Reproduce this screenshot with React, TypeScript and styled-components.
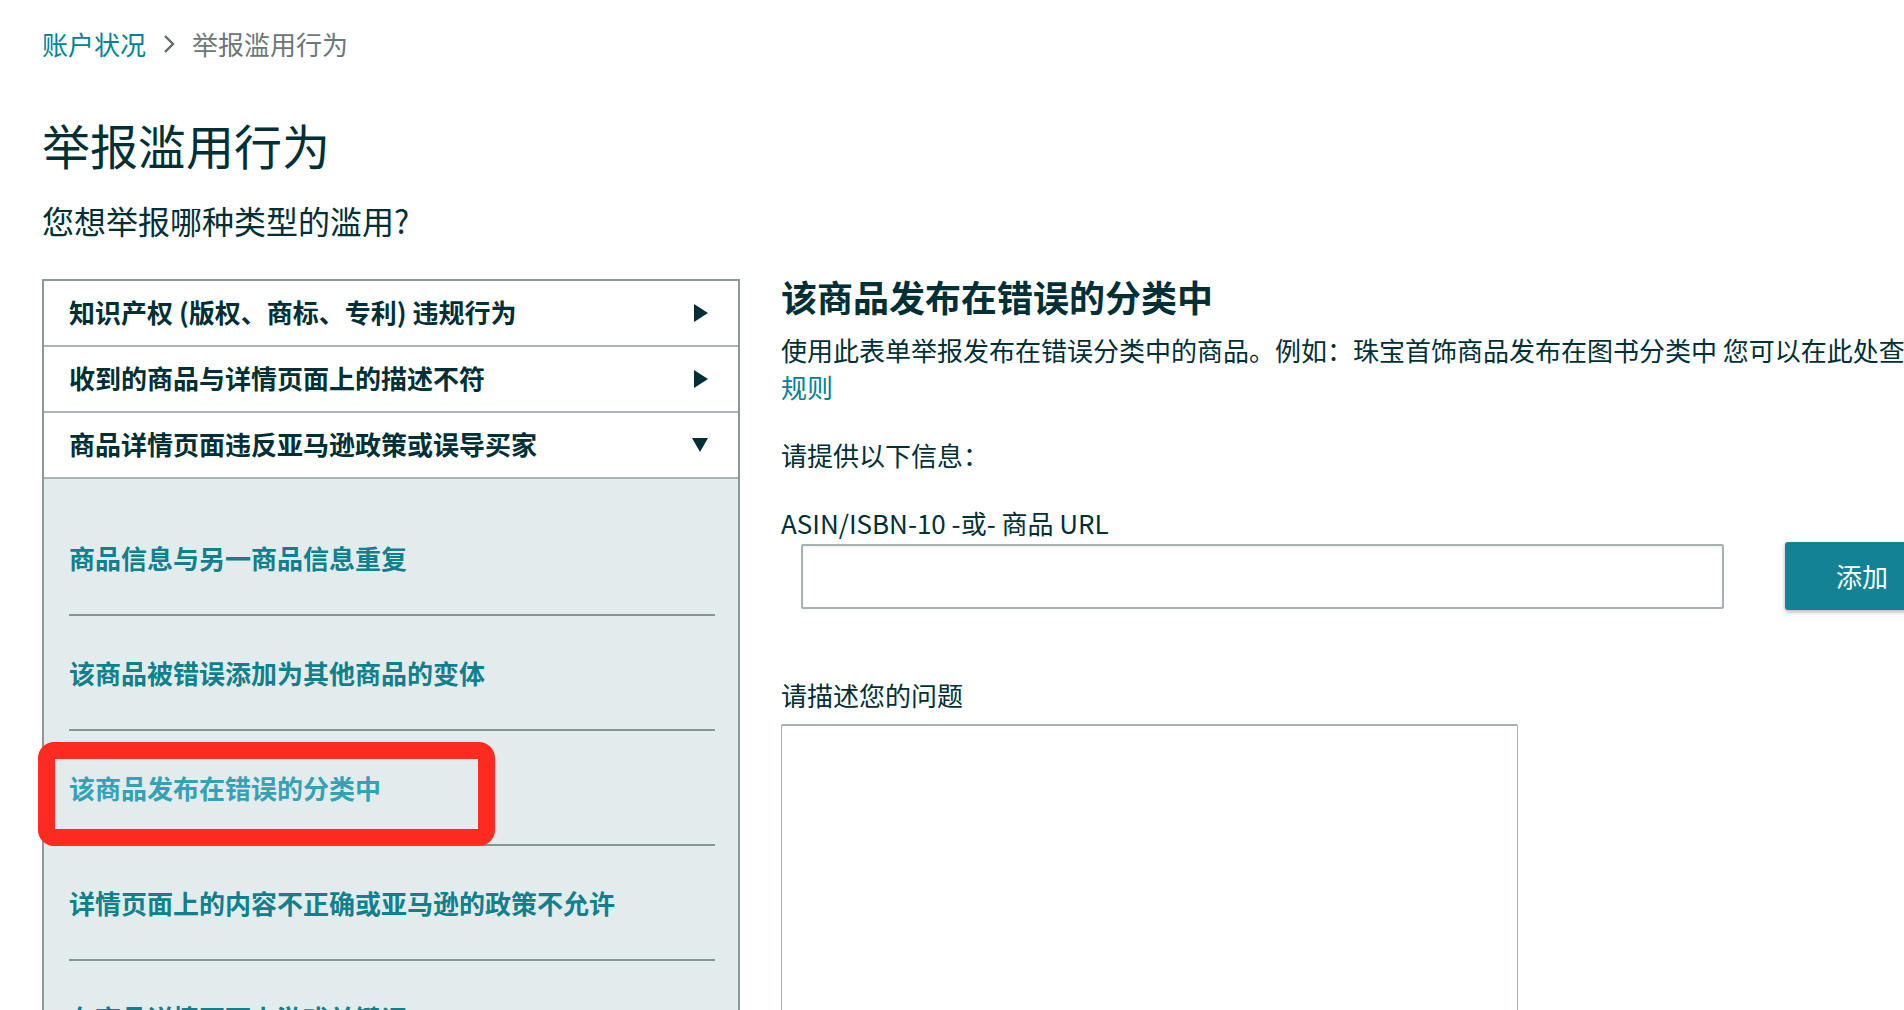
import React from "react";
import styled, { createGlobalStyle } from "styled-components";

const GlobalStyle = createGlobalStyle`
  html, body {
    margin: 0;
    padding: 0;
    background: #ffffff;
    overflow: hidden;
  }
  body {
    font-family: "Noto Sans CJK SC", "Noto Sans", sans-serif;
    color: #002f36;
  }
  * { box-sizing: border-box; }
`;

const Page = styled.div`
  width: 2040px;
  padding: 26px 0 0 42px;
`;

const Breadcrumb = styled.nav`
  display: flex;
  align-items: center;
  gap: 17px;
  font-size: 26px;
  line-height: 36px;
`;

const CrumbLink = styled.a`
  color: #008296;
  text-decoration: none;
`;

const CrumbCurrent = styled.span`
  color: #6c7778;
`;

const Title = styled.h1`
  margin: 53px 0 0;
  font-size: 48px;
  line-height: 58px;
  font-weight: 400;
  color: #002f36;
`;

const Subtitle = styled.p`
  margin: 25px 0 0;
  font-size: 32px;
  line-height: 44px;
  color: #002f36;
`;

const Columns = styled.div`
  display: flex;
  align-items: flex-start;
  gap: 41px;
  margin-top: 37px;
`;

const Accordion = styled.div`
  width: 698px;
  flex-shrink: 0;
  border: 2px solid #8c9899;
  border-bottom: none;
`;

const Header = styled.div`
  display: flex;
  align-items: center;
  justify-content: space-between;
  height: 66px;
  padding: 0 30px 4px 25px;
  border-bottom: 2px solid #a9b5b6;
  background: #ffffff;
  font-size: 26px;
  font-weight: 700;
  color: #002f36;
`;

const ArrowBox = styled.span`
  display: flex;
  align-items: center;
  padding-top: 4px;
`;

const Panel = styled.div`
  background: #e3eced;
  padding: 22px 23px 0 25px;
`;

const Item = styled.div`
  position: relative;
  padding: 39px 0 38px;
  border-bottom: 2px solid #879596;
  font-size: 26px;
  line-height: 36px;
  font-weight: 700;
`;

const ItemLink = styled.a<{ $active?: boolean }>`
  color: ${(p) => (p.$active ? "#35a1b4" : "#127f8c")};
  text-decoration: none;
`;

const Highlight = styled.div`
  position: absolute;
  top: 11px;
  left: -31px;
  width: 457px;
  height: 104px;
  border: 17px solid #fe2b20;
  border-radius: 16px;
  pointer-events: none;
`;

const Right = styled.div`
  width: 1240px;
  flex-shrink: 0;
  margin-top: -3px;
`;

const FormTitle = styled.h2`
  margin: 0;
  font-size: 36px;
  line-height: 40px;
  font-weight: 700;
  color: #002f36;
`;

const Description = styled.p`
  margin: 15px 0 0;
  font-size: 26px;
  line-height: 37px;
  color: #002f36;
`;

const RuleLink = styled.a`
  display: block;
  color: #008296;
  text-decoration: none;
`;

const Label = styled.div<{ $gap: number }>`
  margin-top: ${(p) => p.$gap}px;
  font-size: 26px;
  line-height: 37px;
  color: #002f36;
`;

const InputRow = styled.div`
  display: flex;
  align-items: center;
  gap: 61px;
  padding-left: 20px;
  margin-top: 1px;
`;

const TextInput = styled.input`
  width: 923px;
  height: 65px;
  border: 2px solid #a6b1b2;
  border-radius: 2px;
  box-shadow: inset 0 1px 2px rgba(0, 0, 0, 0.08);
  font-size: 26px;
  padding: 0 14px;
  outline: none;
`;

const AddButton = styled.button`
  width: 154px;
  height: 68px;
  flex-shrink: 0;
  border: none;
  border-radius: 3px;
  background: #138294;
  color: #ffffff;
  font-family: inherit;
  font-size: 26px;
  text-align: left;
  padding: 0 0 2px 51px;
  box-shadow: 0 2px 4px rgba(0, 0, 0, 0.3);
`;

const TextArea = styled.textarea`
  display: block;
  margin-top: 11px;
  width: 737px;
  height: 420px;
  border: 1px solid #a6b1b2;
  border-top: 2px solid #a6b1b2;
  border-radius: 2px;
  resize: none;
  outline: none;
  font-family: inherit;
  font-size: 26px;
`;

const Chevron = () => (
  <svg width="12" height="20" viewBox="0 0 12 20" fill="none">
    <path d="M2 2 L10 10 L2 18" stroke="#5f6a6b" strokeWidth="2.4" />
  </svg>
);

const Arrow = ({ down }: { down?: boolean }) => (
  <ArrowBox>
    {down ? (
      <svg width="16" height="14" viewBox="0 0 16 14">
        <path d="M0 0 H16 L8 14 Z" fill="#002f36" />
      </svg>
    ) : (
      <svg width="14" height="18" viewBox="0 0 14 18">
        <path d="M0 0 L14 9 L0 18 Z" fill="#002f36" />
      </svg>
    )}
  </ArrowBox>
);

const items = [
  "商品信息与另一商品信息重复",
  "该商品被错误添加为其他商品的变体",
  "该商品发布在错误的分类中",
  "详情页面上的内容不正确或亚马逊的政策不允许",
  "在商品详情页面上游戏关键词",
];

export default function App() {
  return (
    <>
      <GlobalStyle />
      <Page>
        <Breadcrumb>
          <CrumbLink href="#">账户状况</CrumbLink>
          <Chevron />
          <CrumbCurrent>举报滥用行为</CrumbCurrent>
        </Breadcrumb>
        <Title>举报滥用行为</Title>
        <Subtitle>您想举报哪种类型的滥用?</Subtitle>
        <Columns>
          <Accordion>
            <Header>
              <span>知识产权 (版权、商标、专利) 违规行为</span>
              <Arrow />
            </Header>
            <Header>
              <span>收到的商品与详情页面上的描述不符</span>
              <Arrow />
            </Header>
            <Header>
              <span>商品详情页面违反亚马逊政策或误导买家</span>
              <Arrow down />
            </Header>
            <Panel>
              {items.map((t, i) => (
                <Item key={t}>
                  <ItemLink href="#" $active={i === 2}>
                    {t}
                  </ItemLink>
                  {i === 2 && <Highlight />}
                </Item>
              ))}
            </Panel>
          </Accordion>
          <Right>
            <FormTitle>该商品发布在错误的分类中</FormTitle>
            <Description>
              使用此表单举报发布在错误分类中的商品。例如：珠宝首饰商品发布在图书分类中 您可以在此处查看分类
              <RuleLink href="#">规则</RuleLink>
            </Description>
            <Label $gap={31}>请提供以下信息：</Label>
            <Label $gap={31}>ASIN/ISBN-10 -或- 商品 URL</Label>
            <InputRow>
              <TextInput type="text" />
              <AddButton>添加</AddButton>
            </InputRow>
            <Label $gap={66}>请描述您的问题</Label>
            <TextArea />
          </Right>
        </Columns>
      </Page>
    </>
  );
}
